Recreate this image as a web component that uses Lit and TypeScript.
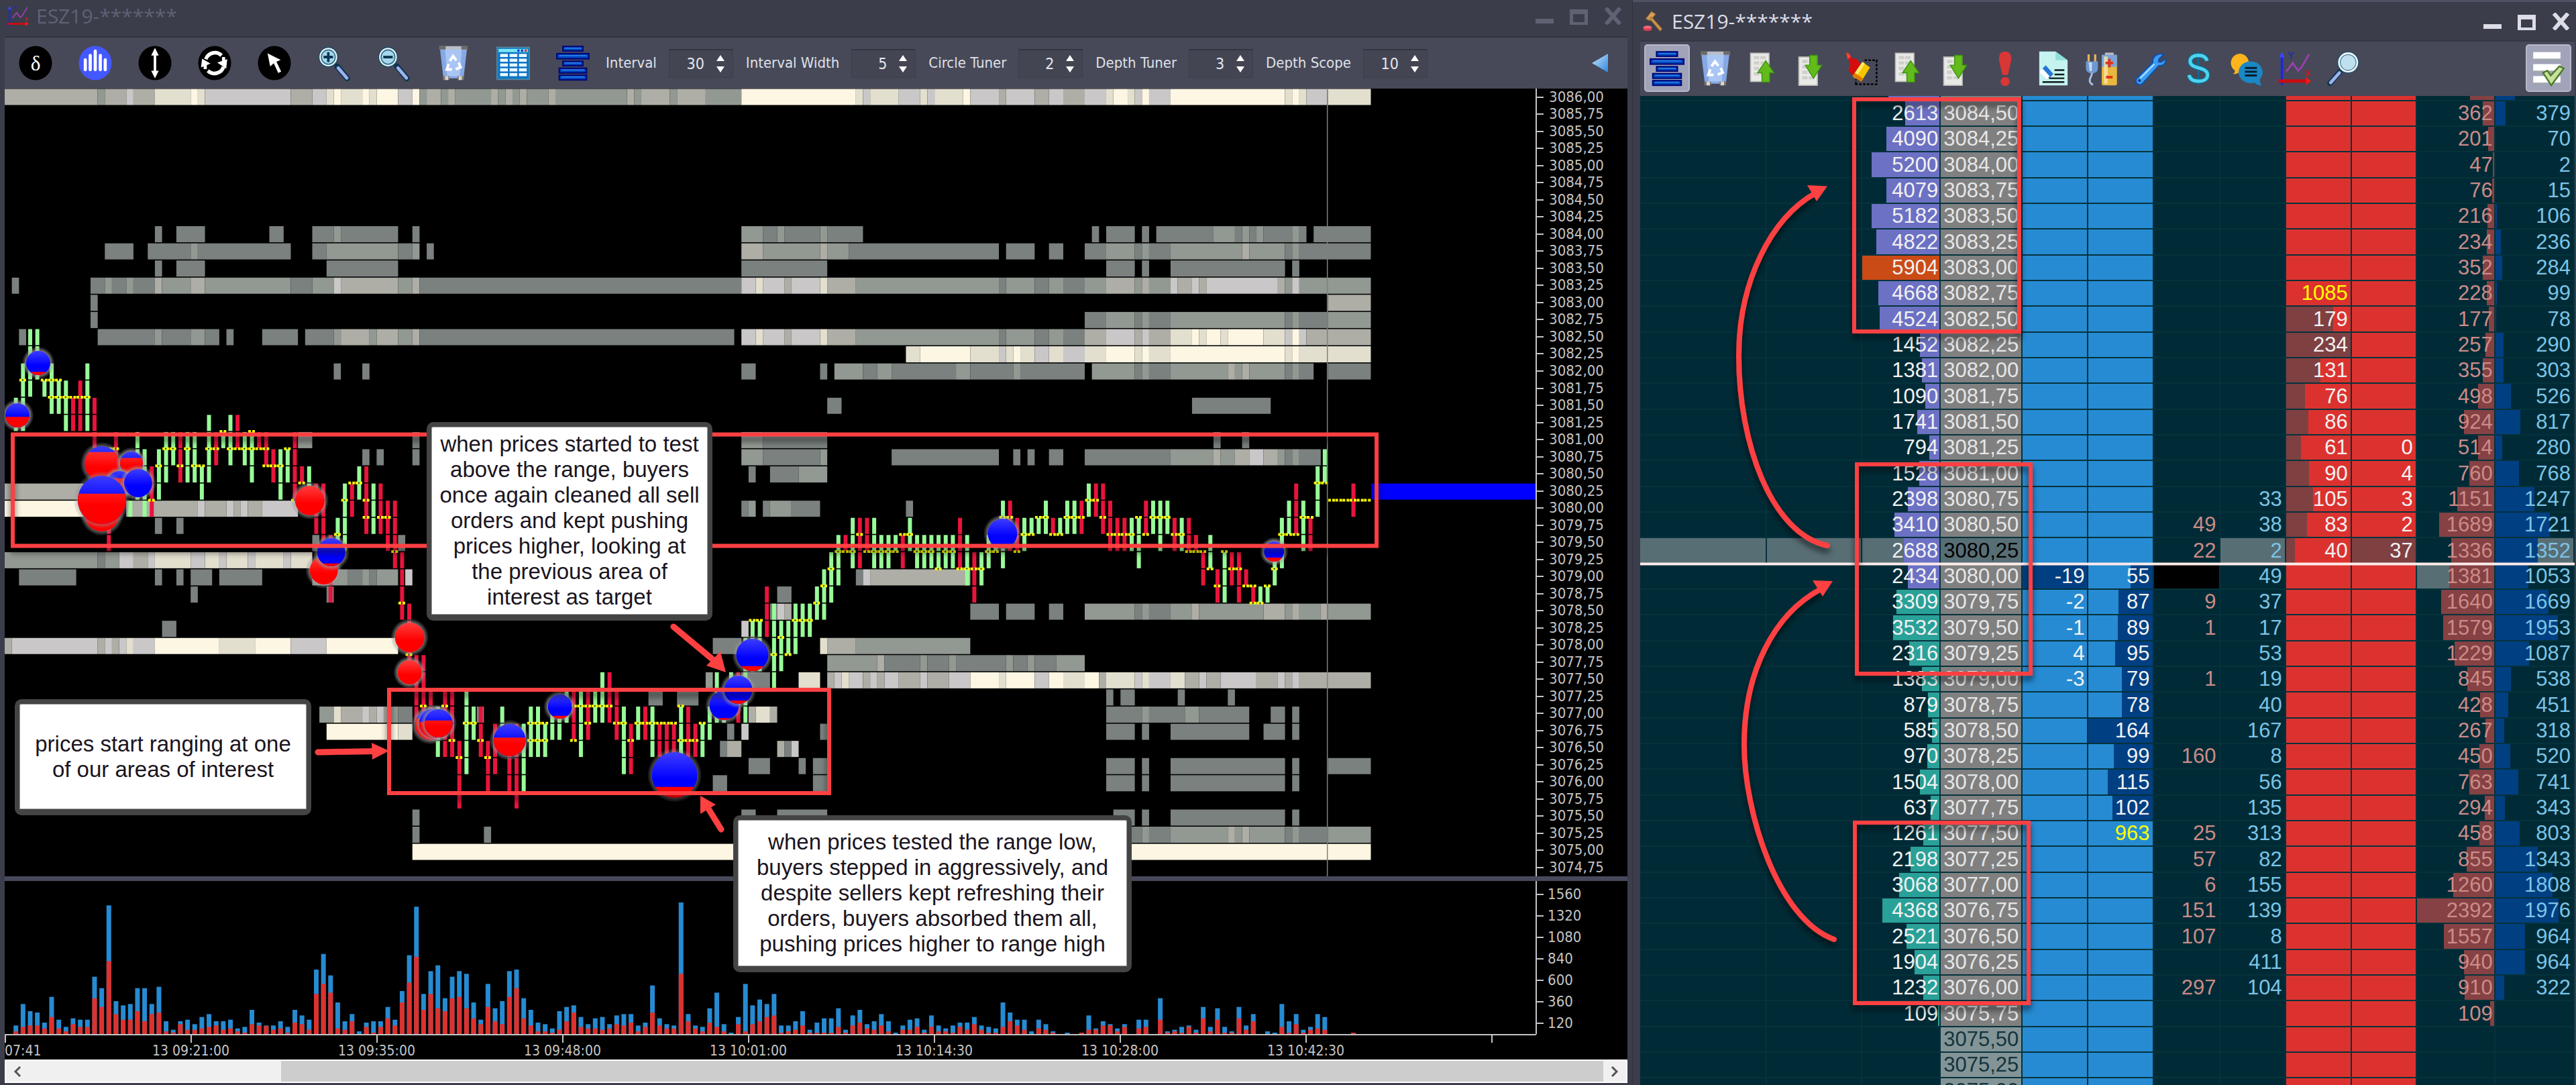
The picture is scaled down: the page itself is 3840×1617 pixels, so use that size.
import { LitElement, html, svg, css, nothing } from "lit";
import { customElement, property, state } from "lit/decorators.js";
import { classMap } from "lit/directives/class-map.js";
import { styleMap } from "lit/directives/style-map.js";

/* ------------------------------------------------------------------ */
/* Chart geometry                                                      */
/* ------------------------------------------------------------------ */
const COL = 32 / 3;
const PLOT_W = 2283;
const PLOT_H = 1174;
const ROW = 25.57;
const rowMid = (i: number) => 12.5 + ROW * i;

const LEVELS: Record<string, string> = {
  a: "#7a817f",
  b: "#929892",
  c: "#aeaea6",
  d: "#c9c7c7",
  e: "#e2dfcf",
  f: "#fdf6e3",
};

/* Resting liquidity per price row: "<start column><level>", "." ends a run. */
const HEAT: Record<number, string> = {
  0: "0c 13b 14c 17d 18c 21e 26f 27e 28d 40c 43d 45e 46f 47e 50f 51e 52f 55d 57f 58b 59c 61b 62c 63b 68c 69b 70c 71b 72c 73b 76c 77b 87c 88b 89c 93b 94c 98b 103f 119e 120d 121e 125d 128e 129d 130e 134f 135d 139c 140d 144c 146d 148c 151d 154e 155f 157e 158d 159f 160d 163f 179e 180f 181e 182d 185e 191.",
  8: "21a 22. 24a 28. 37a 39. 43a 46b 47a 55. 57a 58. 103b 106a 108b 109a 114b 115a 120. 152a 153. 154a 158. 159a 160. 161a 169b 172a 173b 174a 175b 176a 180b 181a 182. 183a 191.",
  9: "14a 18. 20a 26b 27a 40. 43a 45b 55a 57b 58. 59a 60. 103c 106b 114c 115b 118a 139. 140a 144. 146a 148. 151a 154b 158a 159b 160a 163b 173c 174b 179a 180b 181a 191.",
  10: "21a 22. 24a 28. 45a 55. 103a 115. 154a 158. 159a 160. 163a 179. 180a 181.",
  11: "1a 2. 12a 14b 15a 17b 18a 21c 22b 26c 28b 40a 43b 46d 47c 55b 57c 58a 103d 105e 106d 109c 110d 114e 115c 119b 139a 140b 144a 146b 148a 151b 154c 158b 159c 160b 163d 164c 166d 167c 168d 178c 179b 180d 181b 191.",
  12: "12a 13. 185c 191.",
  13: "12a 13. 151a 154b 158a 159b 160a 163b 179a 180b 181a 185b 191.",
  14: "2a 3. 13a 21b 22a 26b 28a 30. 31a 32. 36a 41. 42a 46b 47c 51b 52c 55b 57c 58a 102. 103d 105e 106d 109c 110d 114e 115c 119b 139a 140b 144a 146b 148a 151c 154d 158c 159d 160c 163e 166f 167e 168f 170e 171f 176e 179d 180f 181d 182c 191.",
  15: "126e 128f 135e 139d 140e 141f 142e 144d 146e 148d 151e 154f 158e 159f 160e 163f 179e 180f 181e 191.",
  16: "46a 47. 50a 51. 103a 105. 114a 115. 116b 120a 122b 124a 133b 135a 141b 142a 151. 152b 158a 159b 160a 163b 171c 172b 173c 174b 179a 180b 181a 183. 185a 191.",
  18: "115a 117. 166a 177.",
  20: "41b 43. 57a 58. 103b 106a 115. 169a 170. 173a 174.",
  21: "50a 51. 52a 53. 57a 58. 103b 106a 114b 115. 124a 139. 141a 142. 143a 144. 146a 148. 151a 163b 169c 170b 172c 174d 176c 178b 179a 180b 181a 184.",
  22: "104a 105. 107a 111b 115.",
  23: "0c 11.",
  24: "0f 11. 17c 27d 28c 31d 32c 33d 34c 36d 41. 103a 104b 105. 106a 107b 110a 114. 126a 127.",
  25: "21a 22. 24a 25.",
  26: "43a 44. 55a 56.",
  27: "0b 13a 14b 16d 18c 20d 21e 26d 28e 30d 31e 34d 35e 39d 40e 43.",
  28: "2a 10. 21a 22. 24a 25. 26a 29. 30a 36. 43b 48a 50b 51a 52b 55. 56d 57. 119a 120d 121c 135.",
  29: "26a 27. 45a 46. 108a 110.",
  30: "107a 108d 109c 110. 135a 139. 140a 144. 146a 148. 151b 158a 159b 160a 163b 166c 167b 176c 179b 180c 181b 184c 185b 191.",
  31: "22a 24. 103d 104.",
  32: "0c 1d 13c 14d 15c 16d 17e 18d 21f 30e 35f 40d 45f 55. 99a 103. 114e 115c 119b 135.",
  33: "115b 122c 123a 128b 129a 132b 133a 140b 141a 143b 144a 147b 151.",
  34: "98b 99. 103a 107. 111e 114. 115c 116d 117e 118d 120c 121d 122c 123d 125c 128d 129c 132d 135f 139e 140f 144d 146f 148e 151f 153c 154e 158d 159e 160d 163e 165c 167d 168c 170d 175c 178d 179c 180d 181c 191.",
  35: "90a 92. 94a 97. 154a 155. 156a 158. 164a 165. 171a 172.",
  36: "44b 46e 47c 50d 51c 52d 53c 54b 55a 57. 66a 67. 104c 105e 107c 108. 154a 159b 160a 165b 167a 174. 177a 179. 180a 181.",
  37: "45f 55e 57. 101a 102. 103d 104. 114a 115. 154a 158. 159a 160. 163a 174. 176a 179. 180a 181.",
  38: "100a 101c 103. 108c 109a 110d 111.",
  39: "104a 107. 111a 112. 113a 115. 154a 158. 159a 160. 163a 179. 180a 181. 185a 191.",
  40: "99a 101. 113a 115. 154a 158. 159a 160. 163a 179. 180a 181.",
  42: "57a 58. 103a 105. 108a 115. 155a 158. 159a 160. 163a 179. 180a 181.",
  43: "57a 58. 67a 68. 156a 159b 160a 163b 171c 172b 173c 174b 179a 180b 181a 185b 191.",
  44: "57f 191.",
};

/* Candles: "<column><g|r><first row>-<last row>". */
const CANDLES =
  "1g18-19 2g16-19 3g14-17 4g14-16 5g17-17 6g16-18 7g17-18 8g17-19 9r18-19 10r17-19 11g16-19 12r18-20 14r21-26 15r20-21 17g24-24 18g20-23 19g21-24 20r22-24 21g21-23 22g20-22 23g20-21 24r20-22 25g20-22 26g20-22 27g22-23 28g19-22 29r20-21 30g20-20 31g19-21 32r19-20 33g20-21 34g20-22 35r20-20 36r20-21 37r21-22 38g21-23 39g21-22 40r20-23 41r22-22 42g22-23 43r23-25 44r23-26 45r26-29 46g25-26 47g23-26 48r23-24 49g22-23 50r22-25 51g23-25 52r23-25 53r24-26 54r24-27 55r27-30 56r30-33 57r33-36 58r33-36 59r35-37 60g36-38 61r35-38 62r35-38 63r38-41 64g35-39 65g36-37 66r36-38 67r38-40 68r37-39 69g36-37 70r38-40 71r37-41 72g37-40 73g36-38 74g36-38 75g37-38 76g36-37 77g36-37 78g35-36 79r35-37 80g35-38 81r35-37 82g35-36 83g34-36 84r34-36 85r35-37 86g36-39 87r37-39 88g36-37 89r36-37 90g36-38 91r37-38 92r37-38 93r37-38 94g36-39 95r36-39 96r37-38 97g37-38 98g36-37 99g34-36 100g35-36 101g34-35 102r34-36 103g32-36 104g31-33 105g31-33 106r29-31 107g30-34 108g31-33 109g31-32 110g30-32 111g30-31 112g30-31 113g29-30 114g28-30 115g27-29 116g26-28 117r26-26 118g25-27 119r25-27 120r25-26 121g25-27 122g26-27 123g26-27 124g26-26 125r26-27 126g25-26 127g26-27 128g26-27 129g26-27 130g26-27 131g26-27 132g26-27 133r25-27 134g26-28 135r27-29 136g27-28 137g26-27 138g26-26 139g24-27 140r24-26 141r25-26 142g25-26 143g25-25 144g25-25 145g24-25 146r25-25 147g25-25 148g24-25 149g24-25 150r24-25 151g23-24 152r23-24 153r23-25 154r24-26 155r25-26 156r25-26 157g25-26 158g25-27 159r24-25 160g24-25 161g24-26 162g24-25 163r25-26 164g25-26 165r25-26 166r26-26 167r27-28 168g26-27 169r28-29 170g27-29 171r27-28 172r27-29 173r28-28 174r29-29 175g29-29 176g29-29 177g27-28 178g25-27 179g24-25 180r23-25 181g24-26 182r25-26 183g22-24 184g21-22 188r23-24";

/* Last-trade marks: boundary below row -> columns. */
const MARKS: Record<number, string> = {
  16: "2 5 6 7",
  17: "6 7 8 9 10 11",
  19: "30 34",
  20: "14 15 22 23 25 28 29 31 32 33 34 35 36 39",
  21: "21 24 26 27 36 37 38",
  22: "41 48 49 183 184",
  23: "20 40 47 50 151 152 185 186 187 188 189 190",
  24: "50 52 53 139 140 144 145 148 149 150 153 158 160 161 162 181 182",
  25: "46 119 125 126 142 143 146 147 154 155 156 157 159 163 164 178 179 180",
  26: "54 116 117 118 120 121 122 123 124 127 128 129 131 132 137 138 141 165 166 167 170",
  27: "115 130 133 134 135 136 168 171 172 177",
  28: "114 169 173 174 176",
  29: "55 113 174 175",
  30: "104 105 110 111 112",
  31: "108",
  32: "56 107 109",
  35: "58 61 79 80 81 82 83 84 94",
  36: "64 65 73 74 75 81 85 86 88 89 90 91 92 93 97",
  37: "62 66 71 73 74 75 79 87 94 95 96",
  38: "63 67",
};

/* Volume bars, [total,sold] per column starting at column 1, in 2.5-contract units. */
const VOLUME =
  "38,12 134,32 102,38 96,38 51,25 166,76 64,25 32,12 70,44 64,32 64,32 256,160 205,121 575,326 147,89 128,64 134,64 205,102 205,57 134,89 211,96 57,12 19,7 57,44 64,19 44,19 76,25 89,32 57,38 57,19 64,25 25,12 32,6 108,44 51,38 38,36 38,19 57,25 32,6 108,51 83,44 64,19 288,179 358,224 262,185 141,25 57,19 89,57 12,0 51,32 57,6 57,32 121,70 64,38 192,141 352,230 569,345 179,108 281,179 307,115 160,102 256,160 281,166 269,115 141,70 64,44 224,121 115,57 147,44 281,166 288,205 160,70 108,38 51,12 44,12 25,6 102,19 121,57 128,96 76,32 44,25 70,25 76,19 44,25 83,44 89,38 89,51 38,12 51,32 217,96 70,38 44,25 38,25 588,269 89,57 38,25 32,12 115,51 185,32 44,12 6,0 76,44 224,12 128,44 154,57 134,76 179,83 38,6 38,12 57,19 102,38 19,6 51,6 70,6 70,6 115,32 19,6 83,38 108,51 44,25 57,19 89,38 57,12 6,0 38,19 64,19 70,32 19,6 83,32 38,12 25,12 38,6 51,32 51,19 76,44 38,19 32,6 25,6 141,32 96,57 64,38 64,19 12,0 64,25 44,19 12,6 0,0 6,0 0,0 6,6 83,19 25,19 57,38 44,38 25,12 44,32 0,0 64,25 64,32 0,0 160,64 12,6 19,12 32,6 38,32 19,6 121,70 32,12 115,64 32,6 12,6 121,70 38,19 89,57 0,0 12,0 6,0 134,32 57,6 89,44 19,6 32,19 89,25 76,19 0,0 0,0 0,0 6,6";

/* Trade bubbles: x, y, radius, bought share at the top (0..1). */
const BUBBLES: [number, number, number, number][] = [
  [50, 409, 18, 0.87],
  [19, 487, 18, 0.56],
  [145, 559, 26, 0.17],
  [189, 558, 17, 0.28],
  [171, 588, 18, 0.3],
  [199, 588, 21, 1],
  [145, 634, 26, 0],
  [145, 613, 36, 0.37],
  [455, 614, 22, 0],
  [476, 718, 21, 0],
  [487, 691, 21, 0.9],
  [604, 818, 22, 0],
  [604, 870, 18, 0],
  [635, 948, 23, 0.3],
  [640, 946, 22, 0.45],
  [647, 946, 21, 0.4],
  [753, 971, 24, 0.42],
  [828, 921, 18, 0.88],
  [999, 1023, 34, 0.76],
  [1073, 919, 22, 0.94],
  [1094, 896, 21, 0.88],
  [1115, 844, 24, 0.85],
  [1488, 663, 22, 0.87],
  [1893, 690, 15, 0.8],
];

const PRICES = Array.from({ length: 46 }, (_, i) =>
  (3086 - i * 0.25).toFixed(2).replace(".", ",")
);
const VOLUME_TICKS = [1560, 1320, 1080, 840, 600, 360, 120];
const TIMES = [
  "07:41",
  "13 09:21:00",
  "13 09:35:00",
  "13 09:48:00",
  "13 10:01:00",
  "13 10:14:30",
  "13 10:28:00",
  "13 10:42:30",
  "",
];

/* ------------------------------------------------------------------ */
/* Icons                                                               */
/* ------------------------------------------------------------------ */
const disc = (fill: string, body: unknown) =>
  svg`<circle cx="16" cy="16" r="15.7" fill=${fill}/>${body}`;

const stack = svg`
  <g fill="#0049c0" stroke="#00077a" stroke-width="1.4">
    <rect x="6.5" y="0.8" width="19" height="4"/>
    <rect x="0.7" y="7.4" width="30.6" height="4.6"/>
    <rect x="6.5" y="14.4" width="19" height="4"/>
    <rect x="3" y="20.8" width="26" height="4.2"/>
    <rect x="3" y="27.2" width="26" height="4.2"/>
  </g>
  <g fill="#2b83e8"><rect x="8" y="1.8" width="16" height="1"/><rect x="3" y="8.6" width="26" height="1"/><rect x="8" y="15.4" width="16" height="1"/><rect x="5" y="21.8" width="22" height="1"/><rect x="5" y="28.2" width="22" height="1"/></g>`;

const bin = svg`
  <path d="M3 2h26l-3.4 28H6.4z" fill="#86a8e4"/>
  <path d="M8 3h16l-2 25H10z" fill="#a9c5f4"/>
  <path d="M2.5.5h27v3h-27z" fill="#b9bec9"/>
  <path d="M2.5.5h6v3h-6zM23.5.5h6v3h-6z" fill="#6e6a66"/>
  <path d="M6 28h6v3.5H6zM20 28h6v3.5h-6z" fill="#7a766f"/><path d="M8 28h3v3.5H8zM21 28h3v3.5h-3z" fill="#d8d5cf"/>
  <g fill="none" stroke="#fff" stroke-width="2.4"><path d="M12.5 14l3.2-4.4 3 4"/><path d="M21 15.500l1.800 4.300-4.600 1.800"/><path d="M14.400 21.800H9.600l1.800-5"/></g>`;

const lens = (body: unknown) => svg`
  <path d="M19 19l9.500 11" stroke="#0d3550" stroke-width="5.4" stroke-linecap="round"/>
  <path d="M20 20.500l8.200 9.200" stroke="#9db3ee" stroke-width="3" stroke-linecap="round"/>
  <circle cx="10.500" cy="10.500" r="9.300" fill="#134a66"/>
  <circle cx="10.500" cy="10.500" r="8.500" fill="#e9f5fb"/>
  <circle cx="10.500" cy="10.500" r="6.600" fill="#a5d6ec" stroke="#2d6a86"/>
  ${body}`;

const sheet = (x: number, y: number, arrow: string) => svg`
  <rect x=${x} y=${y} width="17" height="26" fill="#e9e9e6" stroke="#b9bab6"/>
  <path d="M${x + 3} ${y + 4}h5m1 0h5M${x + 3} ${y + 9}h5m1 0h5M${x + 3} ${y + 14}h5m1 0h5M${x + 3} ${y + 19}h5m1 0h5" stroke="#cfd0cc" stroke-width="3"/>
  <path d=${arrow} fill="#62bb1b" stroke="#3f9310" stroke-width="0.900"/>`;
const sheetUp = sheet(4, 2, "M18 9l7.500 11h-4v8.500h-7V20h-4z");
const sheetDown = sheet(4, 5.5, "M14 4h7v9h4l-7.500 12L10 13h4z");

const axes = svg`
  <path d="M4 31V3" stroke="#1c27dd" stroke-width="2.200"/><path d="M1.500 6L4 .5 6.500 6z" fill="#3946ff"/>
  <path d="M1 27.500h27" stroke="#c80d12" stroke-width="3"/><path d="M26 24l5 3.500-5 3.500z" fill="#f01a1a"/>
  <path d="M8 19l6-8 5 7 3-3L29 3" fill="none" stroke="#9c3fae" stroke-width="1.700"/>
  <path d="M10 1l2.500 3L15 1m-2.500 3v3.500" fill="none" stroke="#28309e" stroke-width="1.300"/>
  <path d="M26 18l4 5m0-5l-4 5" stroke="#b5202a" stroke-width="1.400"/>`;

const ICONS: Record<string, unknown> = {
  delta: disc(
    "#000",
    svg`<text x="16" y="22.500" text-anchor="middle" font-family="Liberation Serif, serif" font-size="20" fill="#fff">δ</text>`
  ),
  bars: disc(
    "#4358ff",
    svg`<path d="M6.500 22v-9M11.200 22V9M16 22V5M20.800 22V9M25.500 22v-9" stroke="#fff" stroke-width="3" stroke-linecap="round"/>`
  ),
  vertical: disc(
    "#000",
    svg`<path d="M16 7v18" stroke="#fff" stroke-width="2.400"/><path d="M16 2l3.600 7h-7.200zM16 30l3.600-7h-7.200z" fill="#fff"/>`
  ),
  refresh: disc(
    "#000",
    svg`<path d="M7.500 12.500A9.300 9.300 0 0 1 22.500 9M24.500 19.500A9.300 9.300 0 0 1 9.500 23" fill="none" stroke="#fff" stroke-width="3.400"/><path d="M18.500 15.500l9.500-3-1 8.500zM4 12l-1 8 9-3.500z" fill="#fff" /><path d="M24.500 10.500v5M7 21.500v-4" stroke="#fff" stroke-width="3"/>`
  ),
  cursor: disc(
    "#000",
    svg`<path d="M9.500 7l12.500 6-4 1.800 4.500 9-2.800 1.300-4.300-9-3.400 3z" fill="#fff"/>`
  ),
  zoomIn: lens(svg`<path d="M10.500 6v9M6 10.500h9" stroke="#0d3550" stroke-width="2.400"/>`),
  zoomOut: lens(svg`<path d="M6 10.500h9" stroke="#0d3550" stroke-width="2.400"/>`),
  bin,
  table: svg`
    <rect x="0.500" y="1.500" width="31" height="29.500" fill="#0c7fc0" stroke="#5d83a0"/>
    <rect x="2" y="3" width="28" height="3" fill="#7be4f6"/>
    <path d="M20 4.500h2m1.500 0h2" stroke="#1530c0" stroke-width="2"/><path d="M27 4.500h2" stroke="#e52020" stroke-width="2"/>
    <g fill="#e8faff" stroke="#0c6fc4" stroke-width="1.100">
      ${[7, 11.4, 15.8, 20.2, 24.6].map(
        (y) => svg`${[3, 12, 21].map((x) => svg`<rect x=${x} y=${y} width="8.500" height="4"/>`)}`
      )}
    </g>`,
  stack,
  sheetUp,
  sheetDown,
  bucket: svg`
    <path d="M3 1.500l3 1 2 4 5 1 4 5-5 13-7-8 2-5z" fill="#d60d0d"/><path d="M3 1.500l3 1 1.500 3-3 2z" fill="#ff4030"/>
    <path d="M9 23l9-13 7 5-8 13z" fill="#f6c500"/><path d="M9 23l9-13 2.200 1.500L11.500 25z" fill="#ffec6a"/><path d="M9 23l2-3 8 5.500-2 2.500z" fill="#e07a00"/>
    <path d="M12 30.500V26M20 8.500h11v22H11" fill="none" stroke="#000" stroke-width="1.500" stroke-dasharray="2.200 1.400"/>`,
  alert: svg`<path d="M16 .5c5 0 6 4 5.400 9L18.500 22h-5L10.600 9.500C10 4.500 11 .5 16 .5z" fill="#d93636"/><circle cx="16" cy="28" r="4.200" fill="#d93636"/>`,
  erase: svg`<path d="M3 .5h15l11 8V31.500H3z" fill="#c6f3ef"/><path d="M18 .5v8h11z" fill="#8fe0d8"/>
    <path d="M17 17.500h9M17 21.500h9M12 25h14M6 28.500h20" stroke="#0d1b1b" stroke-width="1.500"/>
    <path d="M5 17l4-4 7 8-4 4z" fill="#2375d8"/><path d="M3 19l3-3 6.500 7-2.500 3z" fill="#fff"/>`,
  power: svg`
    <path d="M4 3v7M10 3v7" stroke="#e3b45a" stroke-width="2"/><path d="M1.500 9.500h11v6c0 3-2 5-5.500 5s-5.500-2-5.500-5z" fill="#6e98cf"/><path d="M4 10.500h3v8H5z" fill="#c5dbf4"/>
    <path d="M7 20c0 4-2 4-2 7 0 2 1 3 3 4" fill="none" stroke="#a7c2e6" stroke-width="1.800"/>
    <rect x="19" y="1.500" width="8" height="3" fill="#b8bcc4"/><rect x="16" y="3.500" width="14" height="28" rx="1.500" fill="#e8b73e"/><rect x="16" y="3.500" width="14" height="11" fill="#7aa3d8"/><rect x="18" y="5" width="3.500" height="25" fill="#f7e5a8" opacity=".8"/>
    <path d="M23 7v8M19.500 11h7M20 24h6" stroke="#e2341d" stroke-width="2.400"/>`,
  wrench: svg`
    <path d="M28.500 3.200l-4.300 4.200-.4 2.400 2.200.3 4.300-2.900c.6 4.300-2.400 6.800-6.300 6.300L9.500 29.500a3.600 3.600 0 0 1-5.800-4.300L18.500 10.500c-.8-4.500 3.500-9.300 10-7.300z" fill="#3b9cf2" stroke="#0f4ea8" stroke-width="1.200"/>
    <path d="M20 12L7 25" stroke="#a9dcff" stroke-width="1.500"/><circle cx="6.300" cy="27.200" r="1.300" fill="#0e3f85"/>`,
  dollar: svg`
    <path d="M16 .5v31" stroke="#0d6a96" stroke-width="2"/>
    <path d="M24 9c-1-3.500-4-5-8-5-4.700 0-7.500 2.200-7.500 5.500 0 7.500 16 4.500 16 12.500 0 3.800-3.500 5.700-8.300 5.700-5 0-8-2-8.700-5.700" fill="none" stroke="#0b6d93" stroke-width="4.600"/>
    <path d="M24 9c-1-3.500-4-5-8-5-4.700 0-7.500 2.200-7.500 5.500 0 7.500 16 4.500 16 12.500 0 3.800-3.500 5.700-8.300 5.700-5 0-8-2-8.700-5.700" fill="none" stroke="#4fd2ee" stroke-width="3"/>`,
  chat: svg`
    <path d="M9.500 2.500a8.500 8.500 0 0 1 0 17c-.4 0-3 2-6 1.500 1.500-1 1.800-2 1.700-3A8.500 8.500 0 0 1 9.500 2.500z" fill="#ffb41d"/>
    <path d="M20 9.500a11 10 0 0 1 8 16.500c0 2.500 1 4 1.500 5.500-3 0-5-1.500-6.500-2.500A11 10 0 1 1 20 9.500z" fill="#1b87c4"/>
    <path d="M14.500 15.500h11M14.500 19h11M14.500 22.500h11" stroke="#071c2c" stroke-width="1.800"/>`,
  axes,
  search: svg`
    <path d="M13 19L4 29.500" stroke="#0d3550" stroke-width="5" stroke-linecap="round"/><path d="M12.500 20L4.500 29" stroke="#9db3ee" stroke-width="3" stroke-linecap="round"/>
    <circle cx="20.500" cy="10.500" r="10" fill="#1c4f6c"/><circle cx="20.500" cy="10.500" r="9.200" fill="#f2f8fb"/><circle cx="20.500" cy="10.500" r="7.200" fill="#bfe0f0" stroke="#4d7f98" stroke-width=".8"/>`,
  checklist: svg`
    <g fill="#fff"><rect x="2" y="1" width="25" height="7"/><rect x="2" y="12" width="25" height="7"/><rect x="2" y="23" width="25" height="7"/></g>
    <g fill="#9fa8a8"><rect x="2" y="7" width="25" height="1.300"/><rect x="2" y="18" width="25" height="1.300"/><rect x="2" y="29" width="25" height="1.300"/></g>
    <path d="M11 20l4-2 3 4.500L26 14l4 2-11.500 15.500z" fill="#c8e09c" stroke="#4d7a2c" stroke-width="1.500"/>`,
  gavel: svg`
    <path d="M5 12L13 1l6 4-8 10z" fill="#d6a05a" stroke="#8c5d24"/><path d="M13 9l15 18-3 3.500-15-19z" fill="#c98f48" stroke="#8c5d24" stroke-width=".8"/>
    <path d="M1.500 25c0-3 12-3 12 0v3c0 3-12 3-12 0z" fill="#d93a52"/><ellipse cx="7.500" cy="24.500" rx="6" ry="2.200" fill="#ee6a7a"/>`,
};

@customElement("tool-icon")
export class ToolIcon extends LitElement {
  @property() name = "";
  static styles = css`
    :host { display: inline-flex; }
    .glyph { width: 100%; height: 100%; display: block; overflow: visible; }
  `;
  render() {
    return html`<svg class="glyph" viewBox="0 0 32 32" preserveAspectRatio="none" aria-hidden="true">${ICONS[this.name] ?? nothing}</svg>`;
  }
}

/* ------------------------------------------------------------------ */
/* Window title bar                                                    */
/* ------------------------------------------------------------------ */
@customElement("title-bar")
export class TitleBar extends LitElement {
  @property() icon = "";
  @property() caption = "";
  @property({ type: Boolean }) active = false;
  static styles = css`
    :host { display: block; }
    .bar { display: flex; align-items: center; height: 100%; color: #5f6273; }
    .bar.active { color: #dcdde6; }
    .icon { width: 34px; height: 32px; margin-right: 10px; }
    .caption { font: 30px/40px "Open Sans", "Noto Sans", sans-serif; flex: 1; margin: 0; white-space: nowrap; }
    .controls { display: flex; gap: 24px; }
    .control { appearance: none; border: 0; padding: 0; background: none; color: inherit; width: 27px; height: 26px; }
    .control svg { display: block; width: 27px; height: 26px; }
  `;
  render() {
    return html`<header class=${classMap({ bar: true, active: this.active })}>
      <tool-icon class="icon" name=${this.icon}></tool-icon>
      <h1 class="caption">${this.caption}</h1>
      <div class="controls">
        <button class="control" aria-label="Minimize"><svg viewBox="0 0 27 26"><path d="M0 17h27v7H0z" fill="currentColor"/></svg></button>
        <button class="control" aria-label="Maximize"><svg viewBox="0 0 27 26"><path d="M0 3h27v23H0zM5 10v12h17V10z" fill="currentColor" fill-rule="evenodd"/></svg></button>
        <button class="control" aria-label="Close"><svg viewBox="0 0 27 26"><path d="M3 1l21 24M24 1L3 25" stroke="currentColor" stroke-width="6"/></svg></button>
      </div>
    </header>`;
  }
}

/* ------------------------------------------------------------------ */
/* Heatmap chart window                                                */
/* ------------------------------------------------------------------ */
const SETTINGS: [string, string, number][] = [
  ["interval", "Interval", 30],
  ["interval-width", "Interval Width", 5],
  ["circle-tuner", "Circle Tuner", 2],
  ["depth-tuner", "Depth Tuner", 3],
  ["depth-scope", "Depth Scope", 10],
];

@customElement("chart-window")
export class ChartWindow extends LitElement {
  @state() private settings = SETTINGS.map((s) => s[2]);

  static styles = css`
    :host { display: block; }
    .window {
      box-sizing: border-box; height: 100%; display: flex; flex-direction: column;
      padding: 0 7px 3px; background: #3b3d4b; border-right: 1px solid #2e303c;
      font-family: "DejaVu Sans Condensed", "Noto Sans", sans-serif;
    }
    .title { height: 54px; padding: 0 8px 0 3px; margin-top: -3px; margin-bottom: 3px; }
    .toolbar {
      box-sizing: border-box; height: 78px; display: flex; align-items: center;
      background: #474958; border-top: 2px solid #30323f; padding: 0 28px 0 21px;
    }
    .tools { display: flex; gap: 39px; }
    .tool { appearance: none; border: 0; padding: 0; background: none; width: 50px; height: 52px; }
    .tool tool-icon { width: 50px; height: 52px; }
    .settings { display: flex; gap: 19px; margin-left: 24px; flex: 1; }
    .field { display: flex; align-items: center; gap: 18px; }
    .label { font-size: 22px; line-height: 28px; color: #dfe0ea; white-space: nowrap; }
    .spinner {
      box-sizing: border-box; width: 96px; height: 43px; display: flex; align-items: center;
      background: #434553; border: 1px solid #3c3e4b; border-top: 2px solid #333542;
    }
    .number {
      appearance: textfield; -moz-appearance: textfield; width: 52px; padding: 0; border: 0; background: none;
      color: #e4e5ee; font: inherit; font-size: 23px; line-height: 28px; text-align: right; outline: 0;
    }
    .number::-webkit-inner-spin-button { appearance: none; margin: 0; }
    .steps { display: flex; flex-direction: column; gap: 8px; margin-left: 18px; }
    .step { appearance: none; border: 0; padding: 0; background: none; width: 12px; height: 9px; }
    .step svg { display: block; width: 12px; height: 9px; }
    .collapse { appearance: none; border: 0; padding: 0; background: none; width: 26px; height: 30px; }
    .collapse svg { display: block; width: 26px; height: 30px; }

    .pane { display: grid; grid-template-columns: 2283fr 137fr; background: #000; }
    .price { flex: 1; min-height: 0; }
    .volume { height: 230px; border-top: 7px solid #47495b; }
    .plot { display: block; width: 100%; height: 100%; min-height: 0; }
    .scale {
      margin: 0; padding: 0; list-style: none; display: flex; flex-direction: column; min-height: 0;
      border-left: 2px solid #c4c4c4; font-size: 22px; line-height: 24px; color: #c4c4c4;
    }
    .scale li { flex: 1; min-height: 0; display: flex; align-items: center; gap: 8px; }
    .scale li::before { content: ""; width: 10px; height: 2px; background: #c4c4c4; }
    .volume .scale { padding-top: 4px; border-bottom: 2px solid transparent; }
    .volume .plot { box-sizing: border-box; border-bottom: 2px solid #c4c4c4; }
    .volume .scale li { gap: 6px; }
    .times {
      margin: 0; padding: 0; list-style: none; display: flex; overflow: hidden; height: 36px;
      background: #000; color: #c4c4c4; font-size: 21px; line-height: 25px;
    }
    .times li { flex: 0 0 277px; display: flex; flex-direction: column; align-items: center; }
    .times li:first-child { flex-basis: 139px; align-items: flex-start; }
    .times li::before { content: ""; width: 2px; height: 11px; background: #c4c4c4; }
    .scroll { display: flex; height: 35px; box-sizing: border-box; background: #f0f0f0; border: 2px solid #fff; }
    .arrow { appearance: none; border: 0; padding: 0; width: 34px; background: #f0f0f0; display: grid; place-items: center; }
    .arrow svg { width: 12px; height: 16px; }
    .track { flex: 1; display: flex; }
    .thumb { margin-left: 16%; flex: 1; background: #cdcdcd; }
  `;

  private step(i: number, d: number) {
    this.settings = this.settings.map((v, k) => (k === i ? v + d : v));
  }

  private heat() {
    return Object.entries(HEAT).map(([row, runs]) => {
      const stops = runs.split(" ").map((t) => [parseInt(t, 10), t.slice(-1)] as [number, string]);
      const y = rowMid(+row) - 12;
      return stops.map(([c, level], k) => {
        if (level === ".") return nothing;
        const end = stops[k + 1][0];
        return svg`<rect x=${c * COL} y=${y} width=${(end - c) * COL} height="24" fill=${LEVELS[level]}/>`;
      });
    });
  }

  private candles() {
    return CANDLES.split(" ").map((t) => {
      const m = /^(\d+)([gr])(\d+)-(\d+)$/.exec(t)!;
      const fill = m[2] === "g" ? "#98fb98" : "#e8143c";
      const parts = [];
      for (let r = +m[3]; r <= +m[4]; r++) {
        parts.push(svg`<rect x=${+m[1] * COL + 3} y=${rowMid(r) - 12} width="6" height="24" fill=${fill}/>`);
      }
      return parts;
    });
  }

  private marks() {
    return Object.entries(MARKS).map(([b, cols]) => {
      const y = rowMid(+b + 0.5);
      return cols.split(" ").map(
        (c) => svg`<path d="M${+c * COL + 0.5} ${y}h12" stroke="#ff0" stroke-width="4" stroke-dasharray="4 2"/>`
      );
    });
  }

  private bubble([x, y, r, share]: [number, number, number, number]) {
    const cut = y - r + 2 * r * share;
    const half = Math.sqrt(Math.max(0, r * r - (cut - y) ** 2));
    const base = share > 0 ? "#0000ff" : "#ff0000";
    return svg`
      <circle cx=${x} cy=${y} r=${r + 6} fill="url(#halo)"/>
      <circle cx=${x} cy=${y} r=${r} fill=${base}/>
      ${share > 0 && share < 1
        ? svg`<path d="M${x - half} ${cut}A${r} ${r} 0 ${share < 0.5 ? 1 : 0} 0 ${x + half} ${cut}z" fill="#ff0000"/>`
        : nothing}
      <circle cx=${x} cy=${y} r=${r} fill="url(#gloss)"/>`;
  }

  render() {
    return html`<section class="window">
      <title-bar class="title" icon="axes" caption="ESZ19-*******"></title-bar>
      <div class="toolbar">
        <div class="tools">
          ${["delta", "bars", "vertical", "refresh", "cursor", "zoomIn", "zoomOut", "bin", "table", "stack"].map(
            (n) => html`<button class="tool" aria-label=${n}><tool-icon name=${n}></tool-icon></button>`
          )}
        </div>
        <div class="settings">
          ${SETTINGS.map(
            ([id, label], i) => html`<div class="field">
              <label class="label" for=${id}>${label}</label>
              <div class="spinner">
                <input class="number" id=${id} type="number" .value=${String(this.settings[i])} />
                <div class="steps">
                  <button class="step" aria-label="Increase" @click=${() => this.step(i, 1)}><svg viewBox="0 0 12 9"><path d="M6 0l6 9H0z" fill="#fff"/></svg></button>
                  <button class="step" aria-label="Decrease" @click=${() => this.step(i, -1)}><svg viewBox="0 0 12 9"><path d="M6 9l6-9H0z" fill="#fff"/></svg></button>
                </div>
              </div>
            </div>`
          )}
        </div>
        <button class="collapse" aria-label="Collapse toolbar">
          <svg viewBox="0 0 26 30"><defs><linearGradient id="tri" x2="1" y2="1"><stop stop-color="#c9e8fb"/><stop offset="1" stop-color="#2f86dd"/></linearGradient></defs><path d="M1 15L25 1v28z" fill="url(#tri)"/></svg>
        </button>
      </div>

      <div class="pane price">
        <svg class="plot" viewBox="0 0 ${PLOT_W} ${PLOT_H}" preserveAspectRatio="none" role="img" aria-label="Depth heatmap">
          <defs>
            <radialGradient id="halo"><stop offset="0.700" stop-color="#b8b0b0" stop-opacity="0.850"/><stop offset="1" stop-color="#888" stop-opacity="0.100"/></radialGradient>
            <linearGradient id="gloss" x2="0" y2="1"><stop stop-color="#fff" stop-opacity="0.240"/><stop offset="0.600" stop-color="#fff" stop-opacity="0"/></linearGradient>
          </defs>
          ${this.heat()}
          <rect x="2038" y=${rowMid(23) - 12} width="245" height="24" fill="#0000ff"/>
          ${this.candles()} ${this.marks()} ${BUBBLES.map((b) => this.bubble(b))}
          <path d="M1972.500 0V${PLOT_H}" stroke="#808080" stroke-width="1.500"/>
        </svg>
        <ul class="scale">${PRICES.map((p) => html`<li>${p}</li>`)}</ul>
      </div>

      <div class="pane volume">
        <svg class="plot" viewBox="0 0 ${PLOT_W} 684" preserveAspectRatio="none" role="img" aria-label="Traded volume">
          ${VOLUME.split(" ").map((t, i) => {
            const [total, sold] = t.split(",").map(Number);
            const x = (i + 1) * COL + 2.5;
            return svg`<rect x=${x} y=${684 - total} width="7" height=${total} fill="#268bd2"/><rect x=${x} y=${684 - sold} width="7" height=${sold} fill="#dc322f"/>`;
          })}
        </svg>
        <ul class="scale">${VOLUME_TICKS.map((v) => html`<li>${v}</li>`)}</ul>
      </div>
      <ul class="times">${TIMES.map((t) => html`<li>${t}</li>`)}</ul>
      <div class="scroll">
        <button class="arrow" aria-label="Scroll left"><svg viewBox="0 0 12 16"><path d="M10 1L3 8l7 7" fill="none" stroke="#555" stroke-width="3"/></svg></button>
        <div class="track"><div class="thumb"></div></div>
        <button class="arrow" aria-label="Scroll right"><svg viewBox="0 0 12 16"><path d="M2 1l7 7-7 7" fill="none" stroke="#555" stroke-width="3"/></svg></button>
      </div>
    </section>`;
  }
}

/* ------------------------------------------------------------------ */
/* Depth of market window                                              */
/* ------------------------------------------------------------------ */
/* price | volume | bid change | bid | sold | bought | ask | ask change | sold total | bought total */
const LADDER = `3084,50|2613|||||||362|379
3084,25|4090|||||||201|70
3084,00|5200|||||||47|2
3083,75|4079|||||||76|15
3083,50|5182|||||||216|106
3083,25|4822|||||||234|236
3083,00|5904|||||||352|284
3082,75|4668|||||1085||228|99
3082,50|4524|||||179||177|78
3082,25|1452|||||234||257|290
3082,00|1381|||||131||355|303
3081,75|1090|||||76||498|526
3081,50|1741|||||86||924|817
3081,25|794|||||61|0|514|280
3081,00|1528|||||90|4|760|768
3080,75|2398||||33|105|3|1151|1247
3080,50|3410|||49|38|83|2|1689|1721
3080,25|2688|||22|2|40|37|1336|1352
3080,00|2434|-19|55||49|||1381|1053
3079,75|3309|-2|87|9|37|||1640|1669
3079,50|3532|-1|89|1|17|||1579|1953
3079,25|2316|4|95||53|||1229|1087
3079,00|1383|-3|79|1|19|||845|538
3078,75|879||78||40|||428|451
3078,50|585||164||167|||267|318
3078,25|970||99|160|8|||450|520
3078,00|1504||115||56|||763|741
3077,75|637||102||135|||294|343
3077,50|1261||963|25|313|||458|803
3077,25|2198|||57|82|||855|1343
3077,00|3068|||6|155|||1260|1808
3076,75|4368|||151|139|||2392|1976
3076,50|2521|||107|8|||1557|964
3076,25|1904||||411|||940|964
3076,00|1232|||297|104|||910|322
3075,75|109|||||||109|
3075,50|||||||||
3075,25|||||||||
3075,00|||||||||`
  .split("\n")
  .map((l) => l.split("|"));

const COLUMNS = [189, 142, 117, 122, 98, 97, 99, 98, 98, 97, 117, 118];
const TOTAL = COLUMNS.reduce((a, b) => a + b, 0);
const fill = (ratio: number) => styleMap({ "--fill": `${Math.round(Math.min(1, Math.max(0, ratio)) * 100)}%` });

@customElement("dom-window")
export class DomWindow extends LitElement {
  static styles = css`
    :host { display: block; }
    .window {
      box-sizing: border-box; height: 100%; display: flex; flex-direction: column; overflow: hidden;
      padding: 0 2px 0 11px; background: #3b3d4b; border-top: 3px solid #505264;
    }
    .title { height: 57px; padding: 0 7px 0 3px; }
    .toolbar {
      box-sizing: border-box; height: 83px; display: flex; align-items: center; justify-content: space-between;
      background: #474958; border-top: 2px solid #343643; padding: 0 5px 2px 6px;
    }
    .tools { display: flex; gap: 4px; }
    .tool {
      appearance: none; box-sizing: border-box; border: 2px solid transparent; border-radius: 5px; padding: 0;
      background: none; width: 68px; height: 71px; display: grid; place-items: center;
    }
    .tool.on { background: #a1a3b8; border-color: #b6b8cc; }
    .tool tool-icon { width: 52px; height: 52px; }
    .ladder { flex: 1; min-height: 0; overflow: hidden; background: #002b36; }
    .grid {
      width: 100%; table-layout: fixed; border-collapse: separate; border-spacing: 0;
      font: 31px/34px "Liberation Sans", Arial, sans-serif; text-align: right;
    }
    .row { height: 38px; }
    .row:nth-child(3n) { height: 39px; }
    .edge { height: 8px; }
    .cell {
      box-sizing: border-box; padding: 0 4px 0 0; overflow: hidden; white-space: nowrap; vertical-align: middle;
      border-right: 2px solid #06323c; border-bottom: 2px solid #06323c; color: #f2f2f2;
      background: linear-gradient(to left, var(--bar, transparent) var(--fill, 0%), var(--base, transparent) 0);
    }
    .from-left { background: linear-gradient(to right, var(--bar, transparent) var(--fill, 0%), var(--base, transparent) 0); }
    .vol { --bar: #2aa198; padding-right: 2px; }
    .vol.upper { --bar: #6c71c4; }
    .vol.poc { --bar: #cb4b16; }
    .level { --base: #808080; padding: 0; text-align: center; font-weight: normal; color: #e6e6e6; }
    .level.idle { --base: #839496; color: #12343d; }
    .level.last { color: #000; }
    .bid { --base: #268bd2; --bar: #003f82; }
    .ask { --base: #dc322f; --bar: #7f4042; }
    .record { color: #ff0; }
    .sold { color: #cc8b88; }
    .sold.total { --bar: #854143; padding-right: 2px; }
    .bought { color: #7cc4e6; }
    .bought.total { --bar: #003f82; }
    .lit { --base: #586e75; }
    .void { --base: #000; }
  `;

  private row(r: string[]) {
    const [price, vol, bidDelta, bid, sold, bought, ask, askDelta, soldAll, boughtAll] = r;
    const p = parseFloat(price.replace(",", "."));
    const last = price === "3080,25";
    const next = price === "3080,00";
    return html`<tr class="row">
      <td class=${classMap({ cell: true, lit: last })}></td>
      <td class=${classMap({ cell: true, lit: last })}></td>
      <td class=${classMap({ cell: true, vol: true, upper: p >= 3080, poc: vol === "5904", lit: last })} style=${fill(+vol / 5904)}>${vol}</td>
      <th scope="row" class=${classMap({ cell: true, level: true, idle: p < 3075.6, last, lit: last })}>${price}</th>
      <td class="cell bid" style=${fill(bidDelta === "-19" ? 1 : 0)}>${bidDelta}</td>
      <td class=${classMap({ cell: true, bid: true, record: bid === "963" })} style=${fill(bid === "963" ? 0 : +bid / 164)}>${bid}</td>
      <td class=${classMap({ cell: true, sold: true, void: next })}>${sold}</td>
      <td class=${classMap({ cell: true, bought: true, lit: last })}>${bought}</td>
      <td class=${classMap({ cell: true, ask: true, "from-left": true, record: ask === "1085" })} style=${fill(ask === "1085" ? 0 : ask === "234" ? 1 : +ask / 234 - 0.03)}>${ask}</td>
      <td class="cell ask from-left" style=${fill(askDelta === "37" ? 1 : 0)}>${askDelta}</td>
      <td class=${classMap({ cell: true, sold: true, total: true, lit: next })} style=${fill(+soldAll / 2392)}>${soldAll}</td>
      <td class=${classMap({ cell: true, bought: true, total: true, "from-left": true, lit: last })} style=${fill((+boughtAll - 60) / 2380)}>${boughtAll}</td>
    </tr>`;
  }

  render() {
    return html`<section class="window">
      <title-bar class="title" icon="gavel" caption="ESZ19-*******" active></title-bar>
      <div class="toolbar">
        <div class="tools">
          ${["stack", "bin", "sheetUp", "sheetDown", "bucket", "sheetUp", "sheetDown", "alert", "erase", "power", "wrench", "dollar", "chat", "axes", "search"].map(
            (n, i) => html`<button class=${classMap({ tool: true, on: i === 0 })} aria-label=${n}><tool-icon name=${n}></tool-icon></button>`
          )}
        </div>
        <button class="tool on" aria-label="checklist"><tool-icon name="checklist"></tool-icon></button>
      </div>
      <div class="ladder">
        <table class="grid">
          <colgroup>${COLUMNS.map((w) => html`<col style=${styleMap({ width: `${(w / TOTAL) * 100}%` })} />`)}</colgroup>
          <thead>
            <tr class="edge">
              <td class="cell"></td><td class="cell"></td>
              <td class="cell vol upper" style=${fill(0.66)}></td>
              <td class="cell level"></td><td class="cell bid"></td><td class="cell bid"></td>
              <td class="cell"></td><td class="cell"></td>
              <td class="cell ask"></td><td class="cell ask"></td>
              <td class="cell sold total" style=${fill(0.31)}></td>
              <td class="cell bought total from-left" style=${fill(0.25)}></td>
            </tr>
          </thead>
          <tbody>${LADDER.map((r) => this.row(r))}</tbody>
        </table>
      </div>
    </section>`;
  }
}

/* ------------------------------------------------------------------ */
/* Desktop with annotations                                            */
/* ------------------------------------------------------------------ */
@customElement("app-root")
export class AppRoot extends LitElement {
  static styles = css`
    :host { display: block; }
    .desktop { position: relative; display: grid; grid-template-columns: 2434fr 1406fr; height: 100vh; overflow: hidden; background: #3b3d4b; }
    .desktop > chart-window, .desktop > dom-window { min-width: 0; min-height: 0; }
    .ink { position: absolute; inset: 0; width: 100%; height: 100%; pointer-events: none; }
    .note {
      position: absolute; box-sizing: border-box; display: flex; align-items: center; justify-content: center;
      margin: 0; text-align: center; white-space: pre-line; background: #fff; color: #1a1420;
      border: 7px solid #444; border-bottom-width: 9px; border-radius: 10px; box-shadow: inset 0 0 0 1px #999;
      font: 33px/38px "Liberation Sans", Arial, sans-serif;
    }
    .above { left: 636px; top: 629px; width: 426px; height: 296px; }
    .range { left: 22px; top: 1042px; width: 442px; height: 173px; }
    .low { left: 1093px; top: 1215px; width: 594px; height: 234px; }
  `;
  render() {
    return html`<main class="desktop">
      <chart-window></chart-window>
      <dom-window></dom-window>
      <svg class="ink" viewBox="0 0 3840 1617" preserveAspectRatio="none" aria-hidden="true">
        <defs><filter id="drop" x="-10%" y="-10%" width="120%" height="120%"><feDropShadow dx="0" dy="7" stdDeviation="5" flood-color="#000" flood-opacity="0.600"/></filter></defs>
        <path d="M2445 840.500H3838" stroke="#fdebea" stroke-width="4"/>
        <g fill="none" stroke="#ff4142" stroke-width="6" filter="url(#drop)">
          <rect x="19" y="647.500" width="2033" height="166"/>
          <rect x="580" y="1028" width="656" height="154"/>
          <rect x="2764" y="148" width="246" height="346"/>
          <rect x="2768" y="692" width="259" height="312"/>
          <rect x="2765" y="1226" width="259" height="269"/>
        </g>
        <g fill="none" stroke="#ff4142" stroke-width="8" stroke-linecap="round" filter="url(#drop)">
          <path d="M2724 813C2640 795 2592 660 2592 530C2592 420 2640 325 2706 288"/>
          <path d="M2734 1400C2650 1370 2600 1210 2600 1110C2600 1000 2645 915 2714 878"/>
          <path d="M474 1121L560 1119.500M1004 934L1064 984M1075 1236L1054 1202" stroke-width="9"/>
        </g>
        <g fill="#ff4142">
          <path d="M2694 276L2724 277.500L2708 300z"/>
          <path d="M2702 865L2732 866L2717 889z"/>
          <path d="M554 1107L580 1119L555 1132z"/>
          <path d="M1053 992L1074 971L1082 1002z"/>
          <path d="M1044 1186L1044 1213L1067 1199z"/>
        </g>
      </svg>
      <p class="note above">when prices started to test
above the range, buyers
once again cleaned all sell
orders and kept pushing
prices higher, looking at
the previous area of
interest as target</p>
      <p class="note range">prices start ranging at one
of our areas of interest</p>
      <p class="note low">when prices tested the range low,
buyers stepped in aggressively, and
despite sellers kept refreshing their
orders, buyers absorbed them all,
pushing prices higher to range high</p>
    </main>`;
  }
}
